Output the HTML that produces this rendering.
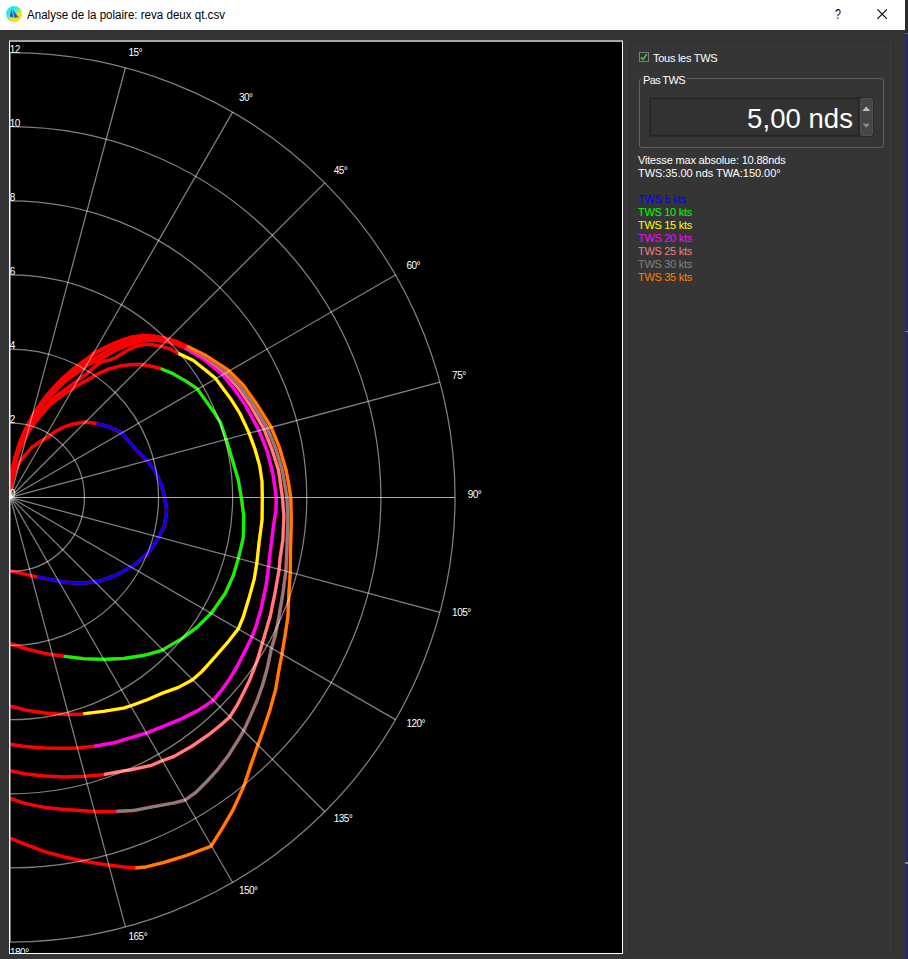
<!DOCTYPE html>
<html><head><meta charset="utf-8">
<style>
html,body{margin:0;padding:0;}
body{width:908px;height:959px;overflow:hidden;background:#353535;position:relative;font-family:"Liberation Sans",sans-serif;}
.abs{position:absolute;}
#title{left:0;top:0;width:905px;height:30px;background:#ffffff;}
#title .txt{left:27px;top:8px;font-size:12.5px;transform:scaleX(0.925);transform-origin:0 0;color:#000;white-space:nowrap;line-height:14px;}
#redge{left:905px;top:0;width:3px;height:959px;background:linear-gradient(90deg,#2f2f52 0,#2f2f52 1px,#27277a 1px);}
#redge2{left:905px;top:0;width:3px;height:33px;background:#2b2b2b;border-bottom:1px solid #46629a;box-sizing:content-box;height:33px}
#canvas{left:9px;top:41px;width:614px;height:913px;background:#000;overflow:hidden;}
#canvas svg{position:absolute;left:-9px;top:-41px;}
#cborder{left:9px;top:41px;width:612px;height:911px;border:1px solid #fff;border-top-color:#aaa;}
#cbt{left:9px;top:40px;width:614px;height:1px;background:#a4a4a4;}
#frame{left:629px;top:41px;width:263px;height:911px;border:1px solid #2e2e2e;}
.lbl{color:#fff;font-size:11px;line-height:13px;white-space:nowrap;}
</style></head><body>
<div id="title" class="abs">
 <svg class="abs" style="left:5px;top:5px" width="18" height="18" viewBox="0 0 18 18">
  <defs><linearGradient id="ig" x1="0.15" y1="0.1" x2="0.75" y2="0.95"><stop offset="0" stop-color="#19e6ff"/><stop offset="0.3" stop-color="#30e8ea"/><stop offset="0.5" stop-color="#8ae880"/><stop offset="0.7" stop-color="#f0e620"/><stop offset="1" stop-color="#ffd800"/></linearGradient></defs>
  <circle cx="9" cy="9" r="8" fill="url(#ig)"/>
  <path d="M6.4 4.0 L4.8 11.4 L8.3 12.6 Z" fill="#1c4fc0"/>
  <path d="M7.8 4.8 L13.6 12.2 L9.1 12.8 Z" fill="#2060d2"/>
 </svg>
 <div class="abs txt">Analyse de la polaire: reva deux qt.csv</div>
 <svg class="abs" style="left:830px;top:5px" width="70" height="20" viewBox="0 0 70 20">
  <text transform="translate(4.9,14) scale(0.74,1)" x="0" y="0" style="font-family:'Liberation Sans',sans-serif;font-size:14.5px;fill:#000">?</text>
  <path d="M47.4 4.4 L56.9 13.9 M56.9 4.4 L47.4 13.9" stroke="#000" stroke-width="1.1" fill="none"/>
 </svg>
</div>
<div id="redge" class="abs"></div><div id="redge2" class="abs"></div>
<div class="abs" style="left:905px;top:331px;width:3px;height:1px;background:#8a8a90"></div><div class="abs" style="left:905px;top:862px;width:3px;height:2px;background:#85857a"></div>
<div class="abs" style="left:0;top:30px;width:905px;height:1px;background:#2e2e2e"></div>
<div id="canvas" class="abs">
<svg width="908" height="959" viewBox="0 0 908 959">
<polyline points="10.0,497.3 10.2,492.5 10.7,487.8 11.5,483.1 12.6,478.4 14.1,473.9 17.5,465.7 21.7,459.4 31.1,448.0 41.5,440.6 47.0,437.8 54.0,432.3 63.4,427.1 72.8,424.0 85.0,421.9 96.9,423.5 110.1,427.3 121.8,432.8 127.8,440.0 136.6,450.4 146.5,459.9 154.2,469.8 160.8,483.0 164.6,497.3 166.6,509.7 164.6,525.6 158.6,537.5 147.7,553.4 133.9,565.3 116.0,575.2 100.2,581.1 80.3,583.5 64.5,582.1 48.6,579.1 35.7,576.7 22.8,573.6 10.0,570.8" fill="none" stroke="#ff0000" stroke-width="3.5" stroke-linejoin="round" stroke-linecap="butt"/>
<polyline points="96.5,423.4 96.9,423.5 110.1,427.3 121.8,432.8 127.8,440.0 136.6,450.4 146.5,459.9 154.2,469.8 160.8,483.0 164.6,497.3 166.6,509.7 164.6,525.6 158.6,537.5 147.7,553.4 133.9,565.3 116.0,575.2 100.2,581.1 80.3,583.5 64.5,582.1 48.6,579.1 37.0,577.0" fill="none" stroke="#0000ff" stroke-width="3.1" stroke-linejoin="round" stroke-linecap="butt"/>
<polyline points="10.0,497.3 10.3,488.8 11.2,480.3 12.7,471.8 14.8,463.5 17.4,455.2 20.7,447.2 24.5,439.3 28.8,431.6 33.8,424.2 39.2,417.1 49.8,404.9 59.7,397.2 69.7,390.4 80.0,383.9 89.9,378.6 99.8,372.9 109.7,368.7 119.7,366.1 129.6,364.7 140.0,364.3 151.8,366.3 160.6,368.5 172.5,373.5 185.7,381.0 196.9,388.5 204.4,398.8 213.8,412.0 220.4,422.3 226.0,438.8 232.6,460.8 238.2,479.5 241.3,497.3 243.7,515.8 243.3,537.6 238.4,558.4 233.4,575.2 225.5,593.0 211.6,612.8 197.7,626.7 181.9,638.6 173.5,643.5 161.6,650.5 143.8,655.4 124.0,658.4 104.1,659.4 84.3,658.8 62.5,656.0 44.7,653.4 24.8,648.5 10.0,643.5" fill="none" stroke="#ff0000" stroke-width="3.5" stroke-linejoin="round" stroke-linecap="butt"/>
<polyline points="160.7,368.6 172.5,373.5 185.7,381.0 196.9,388.5 204.4,398.8 213.8,412.0 220.4,422.3 226.0,438.8 232.6,460.8 238.2,479.5 241.3,497.3 243.7,515.8 243.3,537.6 238.4,558.4 233.4,575.2 225.5,593.0 211.6,612.8 197.7,626.7 181.9,638.6 173.5,643.5 161.6,650.5 143.8,655.4 124.0,658.4 104.1,659.4 84.3,658.8 63.8,656.2" fill="none" stroke="#00ff00" stroke-width="3.1" stroke-linejoin="round" stroke-linecap="butt"/>
<polyline points="10.0,497.3 10.3,488.3 11.3,479.3 12.8,470.4 15.0,461.7 17.8,453.0 21.2,444.5 25.2,436.2 29.8,428.1 35.0,420.3 40.8,412.7 47.1,405.5 53.1,398.1 63.0,391.1 73.0,383.8 80.0,378.3 86.6,374.0 93.2,368.0 98.5,363.6 103.1,361.3 109.7,360.1 115.7,357.5 121.0,354.2 126.3,350.9 132.9,347.6 140.0,345.2 146.0,344.2 152.9,344.8 161.7,346.4 170.5,349.2 178.5,353.5 193.2,360.4 206.3,370.7 215.5,378.3 221.8,386.8 230.7,398.8 240.1,413.8 248.9,432.6 255.1,449.5 259.8,466.4 262.0,481.4 262.3,497.3 262.1,519.7 259.2,541.5 256.8,563.3 254.2,579.2 249.3,597.0 243.3,616.8 238.4,628.7 227.5,642.6 213.6,658.4 202.3,671.1 192.4,679.9 178.2,687.5 162.8,693.0 147.5,699.6 130.0,706.1 124.0,708.0 104.1,711.3 82.3,713.9 64.5,714.5 44.7,712.9 24.8,709.9 10.0,706.0" fill="none" stroke="#ff0000" stroke-width="3.5" stroke-linejoin="round" stroke-linecap="butt"/>
<polyline points="178.4,353.5 178.5,353.5 193.2,360.4 206.3,370.7 215.5,378.3 221.8,386.8 230.7,398.8 240.1,413.8 248.9,432.6 255.1,449.5 259.8,466.4 262.0,481.4 262.3,497.3 262.1,519.7 259.2,541.5 256.8,563.3 254.2,579.2 249.3,597.0 243.3,616.8 238.4,628.7 227.5,642.6 213.6,658.4 202.3,671.1 192.4,679.9 178.2,687.5 162.8,693.0 147.5,699.6 130.0,706.1 124.0,708.0 104.1,711.3 83.3,713.8" fill="none" stroke="#ffff00" stroke-width="3.1" stroke-linejoin="round" stroke-linecap="butt"/>
<polyline points="10.0,497.3 10.4,487.2 11.4,477.2 13.2,467.3 15.6,457.5 18.7,447.8 22.5,438.3 27.0,429.0 32.2,419.9 38.0,411.2 44.4,402.8 51.5,394.7 59.1,387.0 67.3,379.8 80.0,370.7 87.9,364.5 96.5,361.2 102.5,358.1 107.8,354.8 114.4,350.9 121.0,347.9 127.6,345.6 134.2,343.3 141.0,341.0 154.0,340.0 166.0,341.5 176.0,344.3 185.7,348.5 202.6,358.5 221.9,374.1 234.5,389.4 245.7,405.4 258.9,430.2 267.3,451.4 272.9,473.9 276.3,497.3 276.0,509.8 273.0,529.6 270.1,553.4 268.5,567.3 266.1,585.1 261.1,608.9 255.2,628.7 251.6,637.6 244.3,652.5 235.1,670.0 229.6,678.8 222.0,689.7 212.8,700.7 197.9,710.5 180.4,719.3 162.8,726.5 146.4,733.1 130.0,737.9 114.0,742.7 94.2,746.2 76.4,748.0 64.5,748.2 44.7,748.0 24.8,746.6 10.0,744.2" fill="none" stroke="#ff0000" stroke-width="3.5" stroke-linejoin="round" stroke-linecap="butt"/>
<polyline points="184.7,348.1 185.7,348.5 202.6,358.5 221.9,374.1 234.5,389.4 245.7,405.4 258.9,430.2 267.3,451.4 272.9,473.9 276.3,497.3 276.0,509.8 273.0,529.6 270.1,553.4 268.5,567.3 266.1,585.1 261.1,608.9 255.2,628.7 251.6,637.6 244.3,652.5 235.1,670.0 229.6,678.8 222.0,689.7 212.8,700.7 197.9,710.5 180.4,719.3 162.8,726.5 146.4,733.1 130.0,737.9 114.0,742.7 94.2,746.2" fill="none" stroke="#ff00ff" stroke-width="3.1" stroke-linejoin="round" stroke-linecap="butt"/>
<polyline points="10.0,497.3 10.4,486.9 11.5,476.6 13.3,466.3 15.8,456.1 19.0,446.1 23.0,436.3 27.6,426.7 32.9,417.3 38.9,408.3 45.6,399.6 52.9,391.2 60.8,383.3 69.3,375.8 78.4,368.7 89.9,361.4 94.5,358.1 99.8,355.5 106.4,351.5 113.0,347.9 119.7,344.9 126.3,342.6 132.9,340.7 142.0,338.4 154.0,337.6 166.0,339.5 176.0,342.6 186.0,346.8 204.5,357.0 224.7,372.6 238.2,387.6 250.4,405.4 263.9,428.9 272.0,449.5 278.6,470.2 282.4,497.3 283.9,515.8 282.9,539.5 280.0,559.3 279.0,570.2 275.0,593.0 270.1,616.8 263.1,640.6 257.2,660.4 253.7,670.0 249.3,680.9 243.9,691.9 237.3,705.0 229.6,717.1 219.8,725.8 208.8,734.6 191.3,746.6 173.8,756.5 161.7,760.9 151.9,765.2 130.0,770.1 124.0,770.7 103.1,774.7 84.3,776.3 64.5,777.1 44.7,776.1 24.8,773.7 10.0,770.7" fill="none" stroke="#ff0000" stroke-width="3.5" stroke-linejoin="round" stroke-linecap="butt"/>
<polyline points="186.1,346.9 204.5,357.0 224.7,372.6 238.2,387.6 250.4,405.4 263.9,428.9 272.0,449.5 278.6,470.2 282.4,497.3 283.9,515.8 282.9,539.5 280.0,559.3 279.0,570.2 275.0,593.0 270.1,616.8 263.1,640.6 257.2,660.4 253.7,670.0 249.3,680.9 243.9,691.9 237.3,705.0 229.6,717.1 219.8,725.8 208.8,734.6 191.3,746.6 173.8,756.5 161.7,760.9 151.9,765.2 130.0,770.1 124.0,770.7 103.9,774.6" fill="none" stroke="#ff8080" stroke-width="3.1" stroke-linejoin="round" stroke-linecap="butt"/>
<polyline points="10.0,497.3 10.4,486.6 11.5,476.0 13.3,465.4 15.9,455.0 19.3,444.7 23.3,434.6 28.1,424.8 33.6,415.2 39.7,405.9 46.5,396.9 54.0,388.4 62.1,380.2 70.9,372.5 80.2,365.3 93.0,353.6 107.0,346.6 122.0,340.0 132.0,337.5 142.5,336.3 154.0,336.5 166.0,338.5 176.0,341.6 186.3,346.0 205.5,356.3 226.0,371.6 240.1,385.7 253.2,404.5 267.3,427.9 276.1,449.5 282.3,470.2 287.0,497.3 287.9,519.7 286.9,549.4 285.9,571.2 282.9,593.0 279.0,616.8 275.0,636.6 271.4,648.5 268.1,664.4 266.8,670.0 262.5,685.3 257.0,700.7 250.4,716.0 243.9,730.2 239.5,737.9 228.5,755.4 217.6,769.6 206.6,781.7 195.7,792.6 184.7,800.3 173.8,802.9 151.9,806.9 133.9,810.4 116.0,811.4 94.2,811.4 84.3,810.8 64.5,809.4 44.7,807.4 24.8,803.4 10.0,798.5" fill="none" stroke="#ff0000" stroke-width="3.5" stroke-linejoin="round" stroke-linecap="butt"/>
<polyline points="186.8,346.3 205.5,356.3 226.0,371.6 240.1,385.7 253.2,404.5 267.3,427.9 276.1,449.5 282.3,470.2 287.0,497.3 287.9,519.7 286.9,549.4 285.9,571.2 282.9,593.0 279.0,616.8 275.0,636.6 271.4,648.5 268.1,664.4 266.8,670.0 262.5,685.3 257.0,700.7 250.4,716.0 243.9,730.2 239.5,737.9 228.5,755.4 217.6,769.6 206.6,781.7 195.7,792.6 184.7,800.3 173.8,802.9 151.9,806.9 133.9,810.4 116.3,811.4" fill="none" stroke="#808080" stroke-width="3.1" stroke-linejoin="round" stroke-linecap="butt"/>
<polyline points="10.0,497.3 10.4,486.4 11.5,475.5 13.4,464.7 16.1,454.0 19.5,443.5 23.6,433.2 28.5,423.1 34.1,413.3 40.4,403.8 47.3,394.7 55.0,385.9 63.3,377.6 72.2,369.7 81.8,362.3 91.9,355.4 102.6,349.1 113.8,343.4 119.3,341.3 130.7,337.2 143.0,335.4 153.8,335.9 164.8,338.1 175.6,341.2 186.5,346.0 206.3,355.7 228.5,370.3 243.8,385.7 257.0,404.5 271.1,427.0 279.5,447.6 286.1,470.2 288.9,485.2 290.7,497.3 291.3,519.7 290.5,549.4 290.3,572.2 288.9,593.0 287.9,616.8 284.9,636.6 281.9,654.5 278.9,670.0 275.6,689.7 270.1,709.4 263.6,729.1 258.1,744.4 250.4,766.3 243.9,786.1 232.9,810.1 222.0,828.8 211.0,846.3 184.7,856.1 162.8,862.7 145.3,867.1 135.9,867.9 124.0,866.9 104.1,864.5 84.3,861.3 64.5,857.0 44.7,851.6 24.8,844.1 10.0,838.1" fill="none" stroke="#ff0000" stroke-width="3.5" stroke-linejoin="round" stroke-linecap="butt"/>
<polyline points="186.9,346.2 206.3,355.7 228.5,370.3 243.8,385.7 257.0,404.5 271.1,427.0 279.5,447.6 286.1,470.2 288.9,485.2 290.7,497.3 291.3,519.7 290.5,549.4 290.3,572.2 288.9,593.0 287.9,616.8 284.9,636.6 281.9,654.5 278.9,670.0 275.6,689.7 270.1,709.4 263.6,729.1 258.1,744.4 250.4,766.3 243.9,786.1 232.9,810.1 222.0,828.8 211.0,846.3 184.7,856.1 162.8,862.7 145.3,867.1 135.9,867.9 135.4,867.9" fill="none" stroke="#ff8000" stroke-width="3.1" stroke-linejoin="round" stroke-linecap="butt"/>
<g fill="none" stroke="#ffffff" stroke-opacity="0.5" stroke-width="1.25">
<circle cx="10.30" cy="497.30" r="74.12"/>
<circle cx="10.30" cy="497.30" r="148.24"/>
<circle cx="10.30" cy="497.30" r="222.36"/>
<circle cx="10.30" cy="497.30" r="296.48"/>
<circle cx="10.30" cy="497.30" r="370.60"/>
<circle cx="10.30" cy="497.30" r="444.72"/>
<line x1="10.30" y1="497.30" x2="10.30" y2="52.58"/>
<line x1="10.30" y1="497.30" x2="125.40" y2="67.73"/>
<line x1="10.30" y1="497.30" x2="232.66" y2="112.16"/>
<line x1="10.30" y1="497.30" x2="324.76" y2="182.84"/>
<line x1="10.30" y1="497.30" x2="395.44" y2="274.94"/>
<line x1="10.30" y1="497.30" x2="439.87" y2="382.20"/>
<line x1="10.30" y1="497.5" x2="455.02" y2="497.5" stroke-width="1" stroke-opacity="0.66"/>
<line x1="10.30" y1="497.30" x2="439.87" y2="612.40"/>
<line x1="10.30" y1="497.30" x2="395.44" y2="719.66"/>
<line x1="10.30" y1="497.30" x2="324.76" y2="811.76"/>
<line x1="10.30" y1="497.30" x2="232.66" y2="882.44"/>
<line x1="10.30" y1="497.30" x2="125.40" y2="926.87"/>
<line x1="10.30" y1="497.30" x2="10.30" y2="942.02"/>
</g>
<g style="font-family:'Liberation Sans',sans-serif;font-size:10px;letter-spacing:-0.5px;fill:#ffffff">
<text x="128.5" y="55.7">15°</text>
<text x="238.9" y="101.4">30°</text>
<text x="333.7" y="174.1">45°</text>
<text x="406.4" y="268.9">60°</text>
<text x="452.1" y="379.3">75°</text>
<text x="467.7" y="497.8">90°</text>
<text x="452.1" y="616.3">105°</text>
<text x="406.4" y="726.7">120°</text>
<text x="333.7" y="821.5">135°</text>
<text x="238.9" y="894.2">150°</text>
<text x="128.5" y="939.9">165°</text>
<text x="10.0" y="955.5">180°</text>
<text x="9.8" y="497.3">0</text>
<text x="9.8" y="423.2">2</text>
<text x="9.8" y="349.1">4</text>
<text x="9.8" y="274.9">6</text>
<text x="9.8" y="200.8">8</text>
<text x="9.8" y="126.7">10</text>
<text x="9.8" y="52.6">12</text>
</g>
</svg>
</div>
<div id="cborder" class="abs"></div><div id="cbt" class="abs"></div>
<div id="frame" class="abs"></div>
<!-- right panel -->
<div class="abs" style="left:639px;top:52px;width:8px;height:8px;border:1px solid #7d7d7d;background:#2e2e2e"></div>
<svg class="abs" style="left:639px;top:52px" width="10" height="10" viewBox="0 0 10 10"><path d="M2.0 5.3 L4.0 7.4 L7.8 2.0" fill="none" stroke="#38c838" stroke-width="1.7"/></svg>
<div class="abs lbl" style="left:653px;top:52px;letter-spacing:-0.28px">Tous les TWS</div>
<div class="abs" style="left:639px;top:78px;width:243px;height:68px;border:1px solid #616161;border-radius:3px;"></div>
<div class="abs lbl" style="left:641px;top:74px;background:#353535;padding:0 2px;letter-spacing:-0.62px">Pas TWS</div>
<div class="abs" style="left:649px;top:97px;width:225px;height:40px;border-radius:3px;background:#2b2b2b;"></div>
<div class="abs" style="left:650px;top:98px;width:209px;height:38px;border-radius:3px;background:#323232;border:1px solid #242424;box-sizing:border-box"></div>
<div class="abs" style="left:860px;top:98px;width:13px;height:38px;background:#464646;border-radius:2.5px;border:1px solid #505050;box-sizing:border-box"></div>
<svg class="abs" style="left:860px;top:98px" width="13" height="38" viewBox="0 0 13 38"><path d="M2.4 12.9 L6.3 8.5 L10.2 12.9 Z" fill="#bcc0bc"/><path d="M2.7 25.7 L6.3 29.7 L9.9 25.7 Z" fill="#8e8e8e"/></svg>
<div class="abs" style="left:650px;top:103px;width:203px;text-align:right;color:#fff;font-size:27.5px;line-height:32px;letter-spacing:0.05px;white-space:nowrap">5,00 nds</div>
<div class="abs lbl" style="left:638px;top:154px"><span style="letter-spacing:-0.18px">Vitesse max absolue: 10.88nds</span><br><span style="letter-spacing:-0.05px">TWS:35.00 nds TWA:150.00°</span></div>
<div class="abs lbl" style="left:638px;top:193px;letter-spacing:-0.3px">
<span style="color:#0000ff">TWS 5 kts</span><br><span style="color:#00ff00">TWS 10 kts</span><br><span style="color:#ffff00">TWS 15 kts</span><br><span style="color:#ff00ff">TWS 20 kts</span><br><span style="color:#f08080">TWS 25 kts</span><br><span style="color:#808080">TWS 30 kts</span><br><span style="color:#ff8000">TWS 35 kts</span>
</div>
</body></html>
